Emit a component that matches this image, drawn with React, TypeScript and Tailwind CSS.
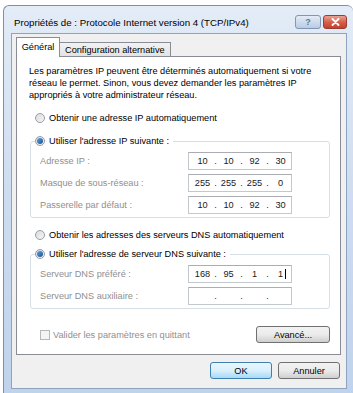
import type { ReactNode } from "react";

const font = "font-['Liberation_Sans',Arial,sans-serif]";

const Radio = ({ checked }: { checked?: boolean }) => (
  <span className="flex h-[10px] w-[10px] shrink-0 items-center justify-center rounded-full border border-[#9a9ea3] bg-gradient-to-br from-[#d9dadb] to-[#f7f7f7]">
    {checked && <span className="h-[6px] w-[6px] rounded-full bg-gradient-to-br from-[#5aa6e6] to-[#1b4f93]" />}
  </span>
);

const IpBox = ({ parts, cursor }: { parts: string[]; cursor?: boolean }) => (
  <div className="flex h-[18px] w-[104px] items-center border border-[#c3c8ce] border-t-[#abadb3] bg-white pl-[3px] text-[#1a1a1a]">
    {parts.map((p, i) => (
      <div key={i} className="flex items-center">
        <span className="relative w-[21px] text-center">
          {p}
          {cursor && i === 3 && <span className="absolute top-[1px] right-[5px] h-[10px] w-px bg-black" />}
        </span>
        {i < 3 && <span className="w-[5px] text-center">.</span>}
      </div>
    ))}
  </div>
);

const Row = ({ label, parts, cursor }: { label: string; parts: string[]; cursor?: boolean }) => (
  <div className="flex items-center">
    <span className="w-[157px] pl-[9px] text-[#8f8f8f]">{label}</span>
    <IpBox parts={parts} cursor={cursor} />
  </div>
);

const Group = ({ title, children }: { title: string; children: ReactNode }) => (
  <fieldset className="ml-[1px] mr-[10px] rounded-[3px] border border-[#d5dfe5] pb-[3px]">
    <legend className="ml-[4px] flex items-center gap-[4px] bg-white pr-[4px]">
      <Radio checked />
      <span>{title}</span>
    </legend>
    <div className="mt-[5px] flex flex-col gap-[4px]">{children}</div>
  </fieldset>
);

const Button = ({ label, def, w }: { label: string; def?: boolean; w: string }) => (
  <div
    className={`flex h-[17px] items-center justify-center rounded-[3px] border ${w} ${
      def
        ? "border-[#3c7fb1] bg-gradient-to-b from-[#eaf6fd] via-[#d9f0fc] to-[#a7d9f5]"
        : "border-[#707070] bg-gradient-to-b from-[#f2f2f2] via-[#ebebeb] to-[#cfcfcf]"
    }`}
  >
    {label}
  </div>
);

export default function App() {
  return (
    <div className={`h-[393px] w-[353px] overflow-hidden bg-white pt-[5px] pl-[3px] text-[9.2px] leading-[12px] text-black ${font}`}>
      <div className="flex h-[388px] flex-col rounded-t-[6px] border border-r-0 border-b-0 border-[#7b90ab] bg-gradient-to-b from-[#e3ecf7] via-[#cddcf0] to-[#bfd3ec] pr-[6px] pl-[7px]">
        <div className="flex h-[27px] items-start justify-between pt-[11px] pl-[3px]">
          <span className="text-[9.7px]">Propriétés de : Protocole Internet version 4 (TCP/IPv4)</span>
          <div className="mt-[-2px] flex items-center gap-[2px]">
            <div className="flex h-[14px] w-[26px] items-center justify-center rounded-[3px] border border-[#8196b4] bg-gradient-to-b from-[#e4ecf6] to-[#b9cbe3] text-[9px] font-bold text-[#5f7896]">
              ?
            </div>
            <div className="flex h-[14px] w-[24px] items-center justify-center rounded-[3px] border border-[#9a3c35] bg-gradient-to-b from-[#e8a394] via-[#d5604d] to-[#c4402c]">
              <svg width="9" height="8" viewBox="0 0 9 8">
                <path d="M1.5 1 L7.5 7 M7.5 1 L1.5 7" stroke="white" strokeWidth="1.8" strokeLinecap="round" />
              </svg>
            </div>
          </div>
        </div>

        <div className="flex flex-1 flex-col border border-[#8ea3bf] bg-[#f0f0f0] pt-[3px] pr-[5px] pb-[6px] pl-[4px]">
          <div className="flex items-end">
            <div className="z-10 mb-[-1px] flex h-[20px] w-[44px] items-center justify-center border border-b-0 border-[#898c95] bg-white pb-[2px]">
              Général
            </div>
            <div className="flex h-[14px] items-center border border-b-0 border-l-0 border-[#898c95] bg-gradient-to-b from-[#f2f2f2] to-[#e3e3e3] px-[5px]">
              Configuration alternative
            </div>
          </div>

          <div className="flex h-[299px] flex-col border border-[#898c95] bg-white pt-[8px] pl-[12px]">
            <p>
              Les paramètres IP peuvent être déterminés automatiquement si votre
              <br />
              réseau le permet. Sinon, vous devez demander les paramètres IP
              <br />
              appropriés à votre administrateur réseau.
            </p>

            <label className="mt-[11px] flex items-center gap-[4px] pl-[6px]">
              <Radio />
              <span>Obtenir une adresse IP automatiquement</span>
            </label>

            <div className="mt-[11px]">
              <Group title="Utiliser l'adresse IP suivante :">
                <Row label="Adresse IP :" parts={["10", "10", "92", "30"]} />
                <Row label="Masque de sous-réseau :" parts={["255", "255", "255", "0"]} />
                <Row label="Passerelle par défaut :" parts={["10", "10", "92", "30"]} />
              </Group>
            </div>

            <label className="mt-[11px] flex items-center gap-[4px] pl-[6px]">
              <Radio />
              <span>Obtenir les adresses des serveurs DNS automatiquement</span>
            </label>

            <div className="mt-[7px]">
              <Group title="Utiliser l'adresse de serveur DNS suivante :">
                <Row label="Serveur DNS préféré :" parts={["168", "95", "1", "1"]} cursor />
                <Row label="Serveur DNS auxiliaire :" parts={["", "", "", ""]} />
              </Group>
            </div>

            <div className="mt-[17px] mr-[10px] flex items-center justify-between pl-[11px]">
              <div className="flex items-center gap-[3px] text-[#8f8f8f]">
                <span className="h-[10px] w-[10px] border border-[#b5b8bc] bg-[#f4f4f4]" />
                <span>Valider les paramètres en quittant</span>
              </div>
              <Button label="Avancé..." w="w-[74px]" />
            </div>
          </div>

          <div className="mt-[7px] flex justify-end gap-[6px] pr-[1px]">
            <Button label="OK" def w="w-[62px]" />
            <Button label="Annuler" w="w-[62px]" />
          </div>
        </div>
        <div className="h-[4px]" />
      </div>
    </div>
  );
}
